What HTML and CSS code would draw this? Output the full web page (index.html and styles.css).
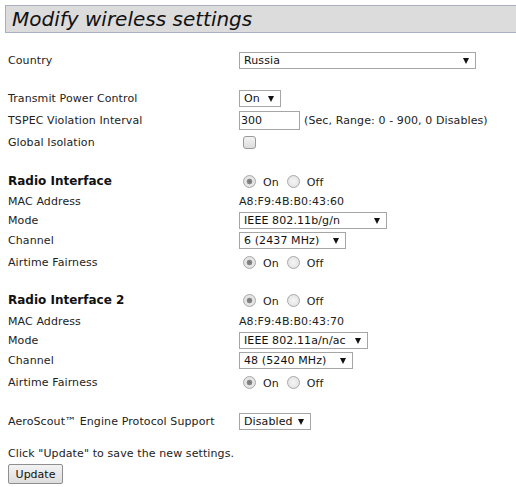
FILE: index.html
```html
<!DOCTYPE html>
<html>
<head>
<meta charset="utf-8">
<link rel="stylesheet" href="styles.css">
</head>
<body>
<h1 class="title">Modify wireless settings</h1>
<div class="form">
  <div class="row r22"><span class="lbl">Country</span><span class="sel w-country"><select><option>Russia</option></select></span></div>
  <div class="spacer s16"></div>
  <div class="row r22"><span class="lbl">Transmit Power Control</span><span class="sel w-on"><select><option>On</option></select></span></div>
  <div class="row r22"><span class="lbl">TSPEC Violation Interval</span><span class="val"><input class="txt" type="text" value="300"><span class="hint">(Sec, Range: 0 - 900, 0 Disables)</span></span></div>
  <div class="row r22"><span class="lbl">Global Isolation</span><span class="val"><input class="chk" type="checkbox"></span></div>
  <div class="spacer s17"></div>
  <div class="row r22"><span class="lbl bold">Radio Interface</span><span class="val"><input class="rad" type="radio" name="r1" checked><span class="rl">On</span><input class="rad" type="radio" name="r1"><span class="rl">Off</span></span></div>
  <div class="row r19"><span class="lbl">MAC Address</span><span class="val">A8:F9:4B:B0:43:60</span></div>
  <div class="row r19"><span class="lbl">Mode</span><span class="sel w-mode"><select><option>IEEE 802.11b/g/n</option></select></span></div>
  <div class="row r21"><span class="lbl">Channel</span><span class="sel w-chan"><select><option>6 (2437 MHz)</option></select></span></div>
  <div class="row r22"><span class="lbl">Airtime Fairness</span><span class="val"><input class="rad" type="radio" name="a1" checked><span class="rl">On</span><input class="rad" type="radio" name="a1"><span class="rl">Off</span></span></div>
  <div class="spacer s16"></div>
  <div class="row r22"><span class="lbl bold">Radio Interface 2</span><span class="val"><input class="rad" type="radio" name="r2" checked><span class="rl">On</span><input class="rad" type="radio" name="r2"><span class="rl">Off</span></span></div>
  <div class="row r20"><span class="lbl">MAC Address</span><span class="val">A8:F9:4B:B0:43:70</span></div>
  <div class="row r19"><span class="lbl">Mode</span><span class="sel w-mode2"><select><option>IEEE 802.11a/n/ac</option></select></span></div>
  <div class="row r21"><span class="lbl">Channel</span><span class="sel w-chan2"><select><option>48 (5240 MHz)</option></select></span></div>
  <div class="row r22"><span class="lbl">Airtime Fairness</span><span class="val"><input class="rad" type="radio" name="a2" checked><span class="rl">On</span><input class="rad" type="radio" name="a2"><span class="rl">Off</span></span></div>
  <div class="spacer s17"></div>
  <div class="row r22"><span class="lbl">AeroScout™ Engine Protocol Support</span><span class="sel w-dis"><select><option>Disabled</option></select></span></div>
  <div class="spacer s11"></div>
  <p class="note">Click "Update" to save the new settings.</p>
  <button class="btn">Update</button>
</div>
</body>
</html>
```
FILE: styles.css
```css
html, body {
  margin: 0;
  padding: 0;
  background: #fff;
}
body {
  font-family: "DejaVu Sans", Verdana, sans-serif;
  font-size: 11px;
  letter-spacing: 0.1px;
  color: #222;
  padding: 5px 0 0 5px;
}
.title {
  margin: 0;
  height: 28px;
  box-sizing: border-box;
  border: 1px solid #a9b0c4;
  border-right: none;
  background: #dcdcdc;
  font-weight: normal;
  font-style: italic;
  font-size: 20px;
  letter-spacing: 0;
  line-height: 26px;
  padding-left: 6px;
  color: #111;
}
.form {
  padding: 16px 0 0 3px;
}
.row {
  display: flex;
  align-items: center;
}
.r19 { height: 19px; }
.r20 { height: 20px; }
.r21 { height: 21px; }
.r22 { height: 22px; }
.s11 { height: 11px; }
.s16 { height: 16px; }
.s17 { height: 17px; }
.lbl {
  width: 231px;
  flex: none;
}
.bold {
  font-weight: bold;
  font-size: 12px;
  letter-spacing: 0;
  color: #111;
}
.val {
  display: flex;
  align-items: center;
}
.sel {
  position: relative;
  display: inline-block;
  height: 17px;
}
.sel select {
  appearance: none;
  -webkit-appearance: none;
  width: 100%;
  height: 17px;
  margin: 0;
  padding: 0 0 0 4px;
  border: 1px solid #a6a6a6;
  border-radius: 0;
  background: #fff;
  font-family: inherit;
  font-size: 11px;
  letter-spacing: 0.1px;
  color: #111;
  box-sizing: border-box;
}
.sel::after {
  content: "";
  position: absolute;
  right: 7px;
  top: 6px;
  border-left: 3.5px solid transparent;
  border-right: 3.5px solid transparent;
  border-top: 6px solid #111;
  pointer-events: none;
}
.w-country { width: 237px; }
.w-on { width: 42px; }
.w-mode { width: 148px; }
.w-chan { width: 107px; }
.w-mode2 { width: 129px; }
.w-chan2 { width: 114px; }
.w-dis { width: 72px; }
.txt {
  width: 61px;
  height: 19px;
  box-sizing: border-box;
  margin: 0;
  padding: 0 0 0 1px;
  border: 1px solid #a6a6a6;
  font-family: inherit;
  font-size: 11px;
  color: #111;
}
.hint {
  margin-left: 4px;
}
.chk {
  appearance: none;
  -webkit-appearance: none;
  width: 13px;
  height: 13px;
  margin: 0 0 0 4px;
  border: 1px solid #9a9a9a;
  border-radius: 3px;
  background: linear-gradient(#f4f4f4, #dcdcdc);
  box-sizing: border-box;
}
.rad {
  appearance: none;
  -webkit-appearance: none;
  width: 13px;
  height: 13px;
  margin: 0 0 0 4px;
  border: 1px solid #a8a8a8;
  border-radius: 50%;
  background: radial-gradient(circle, #f6f6f6 0, #dedede 100%);
  box-sizing: border-box;
}
.rad:checked {
  background: radial-gradient(circle, #777 0, #888 2.5px, #e8e8e8 3.2px, #dcdcdc 100%);
}
.rl {
  margin-left: 7px;
  margin-right: 8px;
  position: relative;
  top: 1px;
}
.rl + .rad {
  margin-left: 0;
}
.note {
  margin: 0;
  height: 21px;
  line-height: 21px;
}
.btn {
  margin: 0;
  height: 20px;
  width: 55px;
  padding: 0;
  border: 1px solid #8f8f8f;
  border-radius: 2px;
  background: linear-gradient(#f3f3f3, #dddddd);
  font-family: inherit;
  font-size: 11px;
  color: #111;
}
```
